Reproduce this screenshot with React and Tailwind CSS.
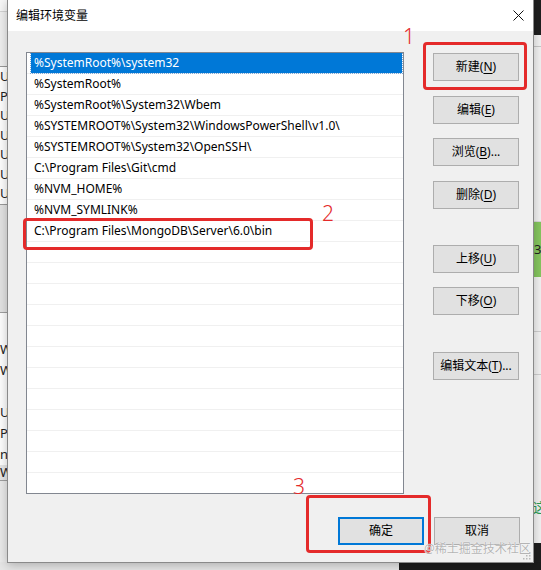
import React from "react";

const rows = [
  "%SystemRoot%\\system32",
  "%SystemRoot%",
  "%SystemRoot%\\System32\\Wbem",
  "%SYSTEMROOT%\\System32\\WindowsPowerShell\\v1.0\\",
  "%SYSTEMROOT%\\System32\\OpenSSH\\",
  "C:\\Program Files\\Git\\cmd",
  "%NVM_HOME%",
  "%NVM_SYMLINK%",
  "C:\\Program Files\\MongoDB\\Server\\6.0\\bin",
];

function Btn({ label, k, tail = "", className = "" }) {
  return (
    <div
      className={`flex h-[28px] w-[86px] items-center justify-center border border-[#adadad] bg-[#e1e1e1] text-[12px] text-black ${className}`}
    >
      <span>
        {label}(<span className="underline underline-offset-2">{k}</span>){tail}
      </span>
    </div>
  );
}

export default function App() {
  const all = [...rows, ...Array(12).fill("")];
  return (
    <div className="relative h-[570px] w-[541px] overflow-hidden bg-[#f0f0f0] font-['Noto_Sans','Noto_Sans_CJK_SC',sans-serif]">
      {/* background window - left strip */}
      <div className="absolute left-0 top-0 flex h-[570px] w-[8px] flex-col bg-[#f0f0f0] text-[13px] leading-[21px] text-[#222]">
        <div className="h-[12px] border-b border-[#d4d4d4] bg-[#f7f7f7]" />
        <div className="h-[55px] border-b border-[#9a9a9a]" />
        <div className="flex h-[138px] flex-col border-b border-[#9a9a9a] bg-white">
          {["U", "P", "U", "U", "U", "U", "U"].map((c, i) => (
            <div key={i} className="h-[19.5px] leading-[19.5px]">{c}</div>
          ))}
        </div>
        <div className="h-[108px] border-b border-[#a0a0a0] bg-[#e4e4e4]" />
        <div className="flex h-[167px] flex-col bg-white pt-[26px]">
          <div className="h-[21px]">W</div>
          <div className="h-[21px]">W</div>
          <div className="h-[21px]" />
          <div className="h-[21px]">U</div>
          <div className="h-[21px]">P</div>
          <div className="h-[21px]">n</div>
          <div className="h-[15px] bg-[#e8e8e8] leading-[15px]">W</div>
        </div>
        <div className="flex-1 border-t border-[#a0a0a0] bg-[#ebebeb]" />
      </div>

      {/* background window - right strip */}
      <div className="absolute right-0 top-0 flex h-[570px] w-[8px] flex-col bg-[#f3f3f3] text-[13px] text-[#222]">
        <div className="h-[35px] bg-[#1f1f1f]" />
        <div className="h-[12px] border-b border-[#c8c8c8]" />
        <div className="h-[175px] border-b border-[#dadada]" />
        <div className="flex h-[55px] items-center bg-[#86c75f] pl-[1px]">3</div>
        <div className="h-[55px] border-b border-[#cfcfcf]" />
        <div className="h-[43px] border-b border-[#cfcfcf]" />
        <div className="flex h-[168px] items-end pb-[26px] text-[#2a9d56]">这</div>
        <div className="flex-1 bg-[#1e1e1e]" />
      </div>

      {/* bottom strip */}
      <div className="absolute bottom-0 left-0 flex h-[8px] w-[541px]">
        <div className="w-[399px] bg-[#e6e6e6]" />
        <div className="flex-1 bg-[#1c1c1c]" />
      </div>

      {/* dialog */}
      <div className="absolute left-[7px] top-0 flex h-[563px] w-[527px] flex-col border-x border-b border-[#8a8a8a] bg-[#f0f0f0] shadow-[0_2px_10px_rgba(0,0,0,0.25)]">
        <div className="flex h-[31px] items-center justify-between bg-white pl-[8px] pr-[9px] text-[12px] text-black">
          <span>编辑环境变量</span>
          <svg width="11" height="11" viewBox="0 0 11 11">
            <path d="M0.5 0.5 L10.5 10.5 M10.5 0.5 L0.5 10.5" stroke="#111" strokeWidth="1" />
          </svg>
        </div>

        <div className="flex flex-1 flex-col pl-[18px] pr-[13px] pt-[21px]">
          <div className="flex">
            <div className="h-[442px] w-[378px] overflow-hidden border border-[#828790] bg-white text-[12px] text-black">
              {all.map((t, i) => (
                <div key={i} className="h-[21px] border-b border-[#f0f0f0] pl-[4px] pr-[1px]">
                  <div
                    className={`flex h-full items-center pl-[3px] ${
                      i === 0 ? "bg-[#0078d7] text-white outline-1 outline-dotted outline-[#7aa8d8]" : ""
                    }`}
                  >
                    {t}
                  </div>
                </div>
              ))}
            </div>

            <div className="ml-[29px] flex flex-col pt-[1px]">
              <Btn label="新建" k="N" />
              <Btn label="编辑" k="E" className="mt-[15px]" />
              <Btn label="浏览" k="B" tail="..." className="mt-[14px]" />
              <Btn label="删除" k="D" className="mt-[15px]" />
              <Btn label="上移" k="U" className="mt-[36px]" />
              <Btn label="下移" k="O" className="mt-[14px]" />
              <Btn label="编辑文本" k="T" tail="..." className="mt-[37px]" />
            </div>
          </div>

          <div className="mt-[23px] flex justify-end gap-[10px]">
            <div className="flex h-[28px] w-[86px] items-center justify-center border-2 border-[#0078d7] bg-[#e1e1e1] text-[12px] text-black">
              确定
            </div>
            <div className="flex h-[28px] w-[86px] items-center justify-center border border-[#adadad] bg-[#e1e1e1] text-[12px] text-black">
              取消
            </div>
          </div>
        </div>

        {/* resize grip */}
        <svg className="absolute bottom-[2px] right-[2px]" width="8" height="8" viewBox="0 0 8 8">
          <rect x="6" y="0" width="1.5" height="1.5" fill="#b8b8b8" />
          <rect x="3" y="3" width="1.5" height="1.5" fill="#b8b8b8" />
          <rect x="6" y="3" width="1.5" height="1.5" fill="#b8b8b8" />
          <rect x="0" y="6" width="1.5" height="1.5" fill="#b8b8b8" />
          <rect x="3" y="6" width="1.5" height="1.5" fill="#b8b8b8" />
          <rect x="6" y="6" width="1.5" height="1.5" fill="#b8b8b8" />
        </svg>
      </div>

      {/* annotations */}
      <div className="absolute left-[423px] top-[42px] h-[48px] w-[104px] rounded-[4px] border-[3px] border-[#e42a2a]" />
      <div className="absolute left-[23px] top-[218px] h-[32px] w-[290px] rounded-[4px] border-[3px] border-[#e42a2a]" />
      <div className="absolute left-[306px] top-[495px] h-[58px] w-[125px] rounded-[4px] border-[3px] border-[#e42a2a]" />
      <div className="absolute left-[403px] top-[26px] text-[21px] font-light leading-none text-[#e42a2a]">1</div>
      <div className="absolute left-[322px] top-[203px] text-[21px] font-light leading-none text-[#e42a2a]">2</div>
      <div className="absolute left-[293px] top-[476px] text-[21px] font-light leading-none text-[#e42a2a]">3</div>

      {/* watermark */}
      <div className="absolute left-[424px] top-[540px] text-[12px] text-[#b4b4b4] [text-shadow:0_0_1px_#ffffff,0_0_1px_#ffffff]">
        @稀土掘金技术社区
      </div>
    </div>
  );
}
